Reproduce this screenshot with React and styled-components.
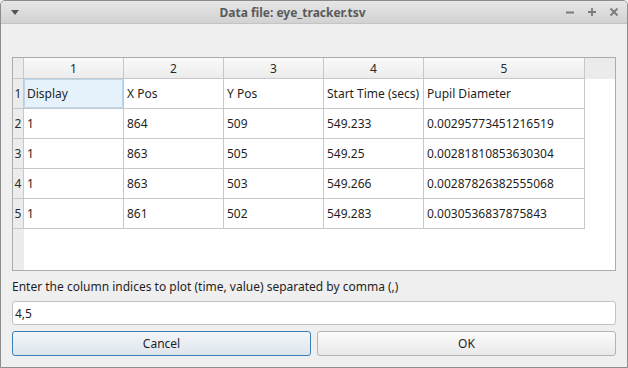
import React from "react";
import styled, { createGlobalStyle } from "styled-components";

const GlobalStyle = createGlobalStyle`
  html, body {
    margin: 0;
    padding: 0;
    background: #efefef;
  }
  body {
    font-family: "Noto Sans", "Open Sans", sans-serif;
    font-size: 12px;
    color: #1f1f1f;
  }
`;

const Window = styled.div`
  width: 628px;
  height: 368px;
  box-sizing: border-box;
  display: flex;
  flex-direction: column;
  border: 1px solid #8c8c8c;
  border-radius: 5px 5px 0 0;
  background: #efefef;
  overflow: hidden;
`;

const TitleBar = styled.div`
  height: 22px;
  display: flex;
  align-items: center;
  padding: 0 8px 0 9px;
  background: linear-gradient(#e6e6e6, #d2d2d2);
  border-bottom: 1px solid #c4c4c4;
  flex-shrink: 0;
`;

const Title = styled.div`
  flex: 1;
  text-align: center;
  font-weight: bold;
  font-size: 12px;
  color: #5a5a5a;
`;

const WinButtons = styled.div`
  display: flex;
  gap: 12px;
  align-items: center;
`;

const Content = styled.div`
  flex: 1;
  display: flex;
  flex-direction: column;
  padding: 33px 11px 11px 11px;
`;

const Frame = styled.div`
  height: 214px;
  box-sizing: border-box;
  border: 1px solid #acacac;
  background: #fff;
  display: flex;
  flex-direction: column;
`;

const HeaderRow = styled.div`
  display: flex;
  height: 21px;
  background: linear-gradient(#fafafa, #ebebeb);
`;

const Corner = styled.div`
  width: 10px;
  border-right: 1px solid #c8c8c8;
  border-bottom: 1px solid #c8c8c8;
  background: #ececec;
`;

const ColHead = styled.div`
  width: ${(p) => p.w}px;
  box-sizing: border-box;
  border-right: 1px solid #c8c8c8;
  border-bottom: 1px solid #c8c8c8;
  display: flex;
  align-items: center;
  justify-content: center;
  color: #2a2a2a;
`;

const HeadFiller = styled.div`
  flex: 1;
  background: #ebebeb;
`;

const Row = styled.div`
  display: flex;
  height: 30px;
`;

const RowHead = styled.div`
  width: 10px;
  border-right: 1px solid #c8c8c8;
  border-bottom: 1px solid #c8c8c8;
  background: #ececec;
  display: flex;
  align-items: center;
  justify-content: center;
  color: #2a2a2a;
`;

const Cell = styled.div`
  width: ${(p) => p.w}px;
  box-sizing: border-box;
  border-right: 1px solid #c8c8c8;
  border-bottom: 1px solid #c8c8c8;
  display: flex;
  align-items: center;
  padding-left: 3px;
  white-space: nowrap;
  background: ${(p) => (p.selected ? "#e6f2fb" : "#fff")};
  box-shadow: ${(p) => (p.selected ? "inset 0 0 0 1px #bcd6ec" : "none")};
`;

const Empty = styled.div`
  flex: 1;
  display: flex;
`;

const EmptyStrip = styled.div`
  width: 11px;
  background: #ececec;
`;

const Label = styled.div`
  margin-top: 7px;
  height: 17px;
  line-height: 17px;
`;

const Input = styled.div`
  margin-top: 6px;
  height: 24px;
  box-sizing: border-box;
  border: 1px solid #c2c2c2;
  border-radius: 3px;
  background: #fff;
  display: flex;
  align-items: center;
  padding-left: 2px;
`;

const Buttons = styled.div`
  margin-top: 6px;
  display: grid;
  grid-template-columns: 1fr 1fr;
  gap: 6px;
`;

const Button = styled.div`
  height: 25px;
  box-sizing: border-box;
  border-radius: 3px;
  display: flex;
  align-items: center;
  justify-content: center;
  border: 1px solid ${(p) => (p.focus ? "#3d7fb5" : "#b4b4b4")};
  background: ${(p) =>
    p.focus
      ? "linear-gradient(#f3f6f9, #dde5ec)"
      : "linear-gradient(#fbfbfb, #e9e9e9)"};
`;

const cols = [100, 100, 100, 100, 161];
const data = [
  ["Display", "X Pos", "Y Pos", "Start Time (secs)", "Pupil Diameter"],
  ["1", "864", "509", "549.233", "0.00295773451216519"],
  ["1", "863", "505", "549.25", "0.00281810853630304"],
  ["1", "863", "503", "549.266", "0.00287826382555068"],
  ["1", "861", "502", "549.283", "0.0030536837875843"],
];

function Glyph({ d }) {
  return (
    <svg width="10" height="10" viewBox="0 0 10 10">
      <path d={d} stroke="#7a7a7a" strokeWidth="1.8" fill="none" />
    </svg>
  );
}

export default function App() {
  return (
    <>
      <GlobalStyle />
      <Window>
        <TitleBar>
          <svg width="10" height="10" viewBox="0 0 10 10">
            <path d="M1 3 L9 3 L5 8 Z" fill="#555" />
          </svg>
          <Title>Data file: eye_tracker.tsv</Title>
          <WinButtons>
            <Glyph d="M1 5.5 H9" />
            <Glyph d="M1 5 H9 M5 1 V9" />
            <Glyph d="M1.5 1.5 L8.5 8.5 M8.5 1.5 L1.5 8.5" />
          </WinButtons>
        </TitleBar>
        <Content>
          <Frame>
            <HeaderRow>
              <Corner />
              {cols.map((w, i) => (
                <ColHead key={i} w={w}>
                  {i + 1}
                </ColHead>
              ))}
              <HeadFiller />
            </HeaderRow>
            {data.map((row, r) => (
              <Row key={r}>
                <RowHead>{r + 1}</RowHead>
                {row.map((v, c) => (
                  <Cell key={c} w={cols[c]} selected={r === 0 && c === 0}>
                    {v}
                  </Cell>
                ))}
              </Row>
            ))}
            <Empty>
              <EmptyStrip />
            </Empty>
          </Frame>
          <Label>
            Enter the column indices to plot (time, value) separated by comma (,)
          </Label>
          <Input>4,5</Input>
          <Buttons>
            <Button focus>Cancel</Button>
            <Button>OK</Button>
          </Buttons>
        </Content>
      </Window>
    </>
  );
}
